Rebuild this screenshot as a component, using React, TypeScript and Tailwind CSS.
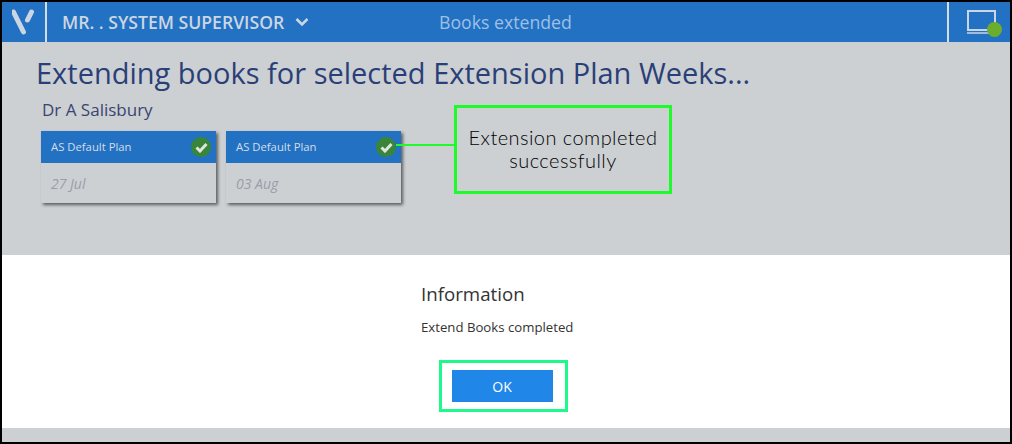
const PlanCard = ({ date, children }: { date: string; children?: React.ReactNode }) => (
  <div className="relative w-[175px] h-[72px] bg-[#ccd0d3] shadow-[2px_2px_3px_rgba(0,0,0,0.55)]">
    <div className="flex items-center h-[32px] pl-[10px] bg-[#2271c3] text-[11.3px] text-[#d5dde6]">AS Default Plan</div>
    <div className="pl-[10px] pt-[10px] text-[14px] italic text-[#9a9ea8]">{date}</div>
    {/* tick */}
    <div className="absolute right-[5px] top-[6px] w-[20px] h-[20px] rounded-full bg-[#3a8638] flex items-center justify-center">
      <svg width="13" height="11" viewBox="0 0 13 11" fill="none">
        <path d="M1.5 5.5 L5 9 L11.5 2" stroke="#dfe6df" strokeWidth="3" />
      </svg>
    </div>
    {children}
  </div>
);

export default function App() {
  return (
    <div className="relative w-[1012px] h-[444px] border-2 border-black flex flex-col bg-[#ccd0d3] overflow-hidden font-['Open_Sans',sans-serif]">
      {/* top bar */}
      <div className="flex items-center h-[40px] bg-[#2271c3] shrink-0">
        <div className="flex items-center justify-center w-[45px] h-full border-r-2 border-[#d5dde6]">
          <svg width="24" height="28" viewBox="0 0 24 28" fill="none">
            <path d="M1.5 4 L11.5 24" stroke="#ccd6e2" strokeWidth="5" strokeLinecap="round" />
            <path d="M19.5 4 L15.5 12" stroke="#ccd6e2" strokeWidth="5" strokeLinecap="round" />
          </svg>
        </div>
        <div className="flex items-center w-[392px] pl-[15px] gap-[11px] text-[17.6px] font-semibold text-[#ccd6e2]">
          <span>MR. . SYSTEM SUPERVISOR</span>
          <svg width="14" height="10" viewBox="0 0 14 10" fill="none">
            <path d="M1.5 2 L7 7.5 L12.5 2" stroke="#ccd6e2" strokeWidth="2.6" />
          </svg>
        </div>
        <div className="flex-1 text-[17.7px] text-[#9fc0e4]">Books extended</div>
        <div className="relative flex items-center justify-center w-[63px] h-full border-l-2 border-[#d5dde6]">
          <svg width="32" height="26" viewBox="0 0 32 26" fill="none" className="ml-[5px]">
            <rect x="2" y="2" width="27" height="19" stroke="#ccd6e2" strokeWidth="2" />
            <path d="M1 24 H30" stroke="#ccd6e2" strokeWidth="1.5" />
          </svg>
          <div className="absolute left-[38px] top-[20px] w-[15px] h-[15px] rounded-full bg-[#6cad2b]" />
        </div>
      </div>

      {/* progress area */}
      <div className="h-[213px] shrink-0 pl-[34px] pt-[12px] bg-[#ccd0d3]">
        <h1 className="text-[29px] leading-[38px] text-[#2a3f77]">Extending books for selected Extension Plan Weeks...</h1>
        <div className="pl-[6px] pt-[7px] text-[17px] leading-[22px] text-[#3a4470]">Dr A Salisbury</div>
        <div className="flex gap-[10px] pl-[5px] pt-[10px]">
          <PlanCard date="27 Jul" />
          <PlanCard date="03 Aug">
            <div className="absolute left-[170px] top-[13px] w-[59px] h-[2px] bg-[#1ffb2a]" />
          </PlanCard>
        </div>
      </div>

      {/* dialog */}
      <div className="h-[173px] shrink-0 bg-white flex flex-col items-center">
        <div className="w-[170px] pt-[26px] text-[18.7px] leading-[26px] text-[#333]">Information</div>
        <div className="w-[170px] pt-[11px] text-[13.2px] leading-[18px] text-[#333]">Extend Books completed</div>
        <div className="mt-[24px] mr-[6px] flex items-center justify-center w-[129px] h-[52px] pr-[2px] border-[3px] border-[#1ff88a]">
          <button className="w-[101px] h-[32px] bg-[#2086e8] text-white text-[14px]">OK</button>
        </div>
      </div>

      {/* callout */}
      <div className="absolute left-[452px] top-[103px] w-[218px] h-[89px] pb-[2px] border-[3px] border-[#1ffb2a] flex items-center justify-center text-center text-[20px] font-light leading-[23px] tracking-[0.45px] text-black font-['Lato',sans-serif]">
        Extension completed<br />successfully
      </div>
    </div>
  );
}
